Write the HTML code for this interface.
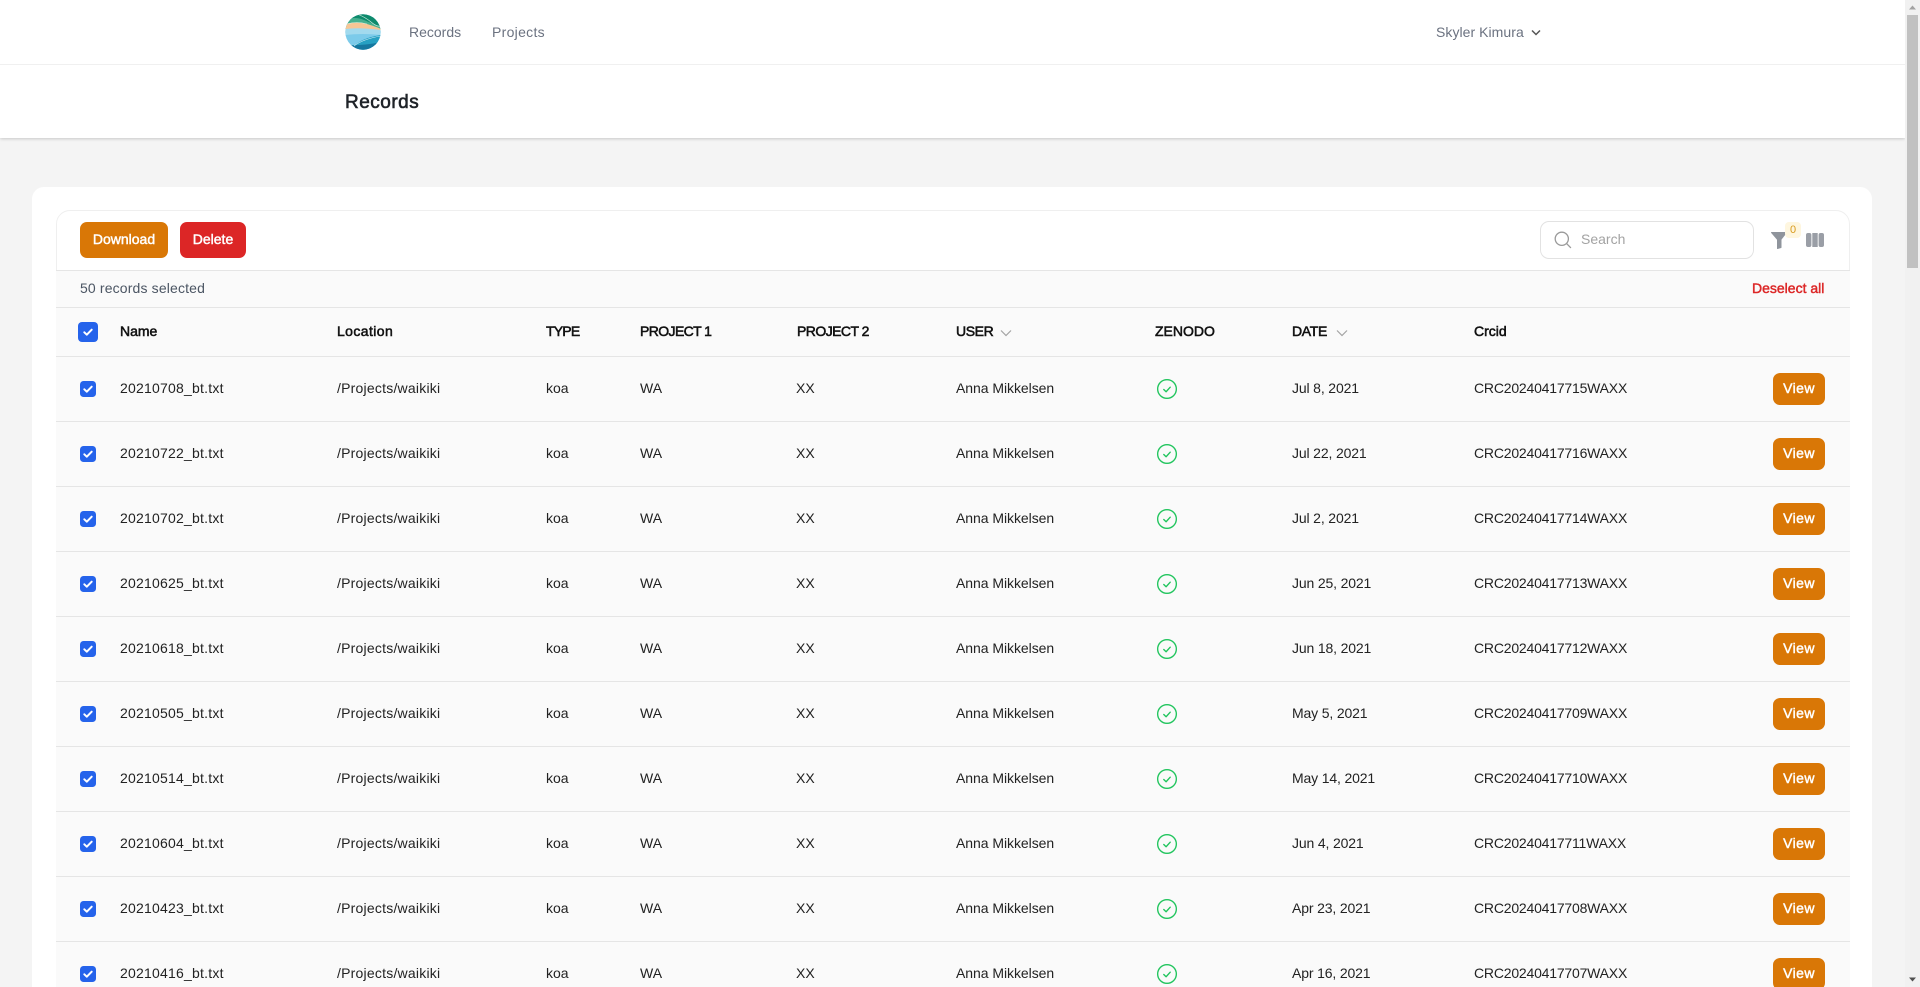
<!DOCTYPE html>
<html lang="en">
<head>
<meta charset="utf-8">
<title>Records</title>
<style>
*{box-sizing:border-box}
html,body{margin:0;padding:0;width:1920px;height:987px;overflow:hidden;background:#f4f4f4;font-family:"Liberation Sans",sans-serif;color:#1a1a1a}
#page{position:relative;width:1920px;height:987px;overflow:hidden;background:#f4f4f4}
.a{position:absolute;white-space:nowrap}
#top{position:absolute;left:0;top:0;width:1905px;height:138px;background:#fff;box-shadow:0 1px 3px rgba(0,0,0,.18)}
#line{position:absolute;left:0;top:64px;width:1905px;height:1px;background:#f0f0f0}
.nav{font-size:14px;color:#6b7280;top:24px;line-height:17px}
#outer{position:absolute;left:32px;top:187px;width:1840px;height:830px;background:#fff;border-radius:12px}
#tbl{position:absolute;left:56px;top:210px;width:1794px;height:777px;border:1px solid #efefef;border-radius:14px 14px 0 0;background:#fff;overflow:hidden}
.strip{position:absolute;left:56px;width:1794px;background:#fafafa;border-top:1px solid #e5e5e5}
.btn{position:absolute;color:#fff;font-size:14px;text-align:center;border-radius:7px;-webkit-text-stroke:.45px #fff}
.h{font-size:14px;top:323px;line-height:17px;color:#111;-webkit-text-stroke:.55px #111}
.row{position:absolute;left:56px;width:1794px;height:65px;background:#fafafa;border-top:1px solid #e5e5e5;font-size:14px;color:#222}
.row span{position:absolute;top:23px;line-height:17px;white-space:nowrap}
.row svg{position:absolute}
.row b{position:absolute;left:1717px;top:16px;width:52px;height:32px;background:#d97706;color:#fff;border-radius:7px;font-size:14px;font-weight:400;letter-spacing:.4px;-webkit-text-stroke:.45px #fff;text-align:center;line-height:31px}
.cb{position:absolute;left:24px;top:24px;width:16px;height:16px;background:#2563eb;border-radius:3.5px}
.c1{left:64px;letter-spacing:.22px}.c2{left:281px;letter-spacing:.22px}.c3{left:490px}.c4{left:584px}.c5{left:740px}.c6{left:900px;letter-spacing:-.05px}.c7{left:1236px;letter-spacing:-.15px}.c8{left:1418px;letter-spacing:-.2px}
</style>
</head>
<body>
<div id="page">
<svg width="0" height="0" style="position:absolute">
<defs>
<symbol id="ok" viewBox="0 0 24 24"><circle cx="12" cy="12" r="10.2" fill="none" stroke="#22c55e" stroke-width="1.5"/><path d="M8.5 12.5l2.5 2.5 4.5-5" fill="none" stroke="#22c55e" stroke-width="1.5" stroke-linecap="round" stroke-linejoin="round"/></symbol>
<symbol id="tick" viewBox="0 0 16 16"><path d="M4.3 8.3l2.5 2.4 4.9-5" fill="none" stroke="#fff" stroke-width="2" stroke-linecap="round" stroke-linejoin="round"/></symbol>
</defs>
</svg>

<div id="top"></div>
<div id="line"></div>

<svg class="a" style="left:345px;top:14px" width="36" height="36" viewBox="0 0 36 36">
<defs><clipPath id="lc"><circle cx="18" cy="18" r="17.7"/></clipPath></defs>
<g clip-path="url(#lc)">
<rect width="36" height="36" fill="#7ccbea"/>
<rect width="36" height="12" fill="#0e8a6c"/>
<path d="M0 6Q10 2 19 6T36 13V16H0Z" fill="#46b08f"/>
<path d="M0 10Q12 7 22 10T36 15V17H0Z" fill="#f7c695"/>
<path d="M0 15Q14 13 36 16V21Q18 19 0 21Z" fill="#a2daee"/>
<path d="M8 33Q16 24 36 21V36H0Z" fill="#26a0c2"/>
<path d="M0 31Q18 32 36 28V36H0Z" fill="#15779f"/>
<path d="M12 0Q20 3 26 8T36 12M2 10Q12 7 22 10" fill="none" stroke="#d8f0e4" stroke-width=".6"/>
<path d="M9 32Q18 25 36 22" fill="none" stroke="#d6f2fa" stroke-width=".6"/>
</g>
</svg>

<div class="a nav" style="left:409px">Records</div>
<div class="a nav" style="left:492px;letter-spacing:.3px">Projects</div>
<div class="a nav" style="left:1436px;letter-spacing:.05px">Skyler Kimura</div>
<svg class="a" style="left:1531px;top:29px" width="10" height="7" viewBox="0 0 10 7"><path d="M1 1.5l4 4 4-4" fill="none" stroke="#555" stroke-width="1.5"/></svg>
<div class="a" style="left:345px;top:92px;font-size:19px;letter-spacing:.5px;-webkit-text-stroke:.6px #1f2328;color:#1f2328;line-height:22px">Records</div>

<div id="outer"></div>
<div id="tbl"></div>

<div class="btn" style="left:80px;top:222px;width:88px;height:36px;line-height:35px;background:#d97706">Download</div>
<div class="btn" style="left:180px;top:222px;width:66px;height:36px;line-height:35px;background:#dc2626">Delete</div>

<div class="a" style="left:1540px;top:221px;width:214px;height:38px;border:1px solid #e2e2e2;border-radius:9px;background:#fff"></div>
<svg class="a" style="left:1554px;top:231px" width="18" height="18" viewBox="0 0 18 18"><circle cx="7.8" cy="7.8" r="6.6" fill="none" stroke="#9a9a9a" stroke-width="1.3"/><path d="M12.6 12.6l4.3 4.3" stroke="#9a9a9a" stroke-width="1.3"/></svg>
<div class="a" style="left:1581px;top:231px;font-size:14px;line-height:17px;color:#a3a3a3">Search</div>

<svg class="a" style="left:1771px;top:232px" width="16" height="17" viewBox="0 0 16 17"><path d="M.5 .5H15.5L10 7.5V15.5L6.5 16.5V7.5Z" fill="#8f949c" stroke="#8f949c" stroke-linejoin="round"/></svg>
<div class="a" style="left:1785px;top:222px;width:16px;height:16px;background:#fef6df;border-radius:4px;color:#d99a1c;font-size:11px;line-height:16px;text-align:center">0</div>
<svg class="a" style="left:1806px;top:233px" width="18" height="14" viewBox="0 0 18 14"><rect x="0" y="0" width="5.4" height="14" rx="2" fill="#9a9ea6"/><rect x="6.3" y="0" width="5.4" height="14" fill="#9a9ea6"/><rect x="12.6" y="0" width="5.4" height="14" rx="2" fill="#9a9ea6"/></svg>

<div class="strip" style="top:270px;height:37px"></div>
<div class="a" style="left:80px;top:280px;font-size:14px;line-height:17px;color:#4b5563;letter-spacing:.15px">50 records selected</div>
<div class="a" style="left:1752px;top:280px;font-size:14px;line-height:17px;color:#dc2626;-webkit-text-stroke:.45px #dc2626">Deselect all</div>
<div class="strip" style="top:307px;height:49px"></div>

<div class="a" style="left:78px;top:322px;width:20px;height:20px;background:#2563eb;border-radius:4px"><svg style="position:absolute;left:2px;top:2px" width="16" height="16"><use href="#tick"/></svg></div>
<div class="a h" style="left:120px">Name</div>
<div class="a h" style="left:337px;letter-spacing:.4px">Location</div>
<div class="a h" style="left:546px;letter-spacing:-.8px">TYPE</div>
<div class="a h" style="left:640px;letter-spacing:-.6px">PROJECT 1</div>
<div class="a h" style="left:797px;letter-spacing:-.55px">PROJECT 2</div>
<div class="a h" style="left:956px;letter-spacing:-.4px">USER</div>
<svg class="a" style="left:1000px;top:329px" width="12" height="8" viewBox="0 0 12 8"><path d="M1 1.5l5 5 5-5" fill="none" stroke="#a3a3a3" stroke-width="1.2"/></svg>
<div class="a h" style="left:1155px">ZENODO</div>
<div class="a h" style="left:1292px;letter-spacing:-.3px">DATE</div>
<svg class="a" style="left:1336px;top:329px" width="12" height="8" viewBox="0 0 12 8"><path d="M1 1.5l5 5 5-5" fill="none" stroke="#a3a3a3" stroke-width="1.2"/></svg>
<div class="a h" style="left:1474px">Crcid</div>

<div class="row" style="top:356px"><i class="cb"><svg width="16" height="16"><use href="#tick"/></svg></i><span class="c1">20210708_bt.txt</span><span class="c2">/Projects/waikiki</span><span class="c3">koa</span><span class="c4">WA</span><span class="c5">XX</span><span class="c6">Anna Mikkelsen</span><svg style="left:1100px;top:21px" width="22" height="22"><use href="#ok"/></svg><span class="c7">Jul 8, 2021</span><span class="c8">CRC20240417715WAXX</span><b>View</b></div>
<div class="row" style="top:421px"><i class="cb"><svg width="16" height="16"><use href="#tick"/></svg></i><span class="c1">20210722_bt.txt</span><span class="c2">/Projects/waikiki</span><span class="c3">koa</span><span class="c4">WA</span><span class="c5">XX</span><span class="c6">Anna Mikkelsen</span><svg style="left:1100px;top:21px" width="22" height="22"><use href="#ok"/></svg><span class="c7">Jul 22, 2021</span><span class="c8">CRC20240417716WAXX</span><b>View</b></div>
<div class="row" style="top:486px"><i class="cb"><svg width="16" height="16"><use href="#tick"/></svg></i><span class="c1">20210702_bt.txt</span><span class="c2">/Projects/waikiki</span><span class="c3">koa</span><span class="c4">WA</span><span class="c5">XX</span><span class="c6">Anna Mikkelsen</span><svg style="left:1100px;top:21px" width="22" height="22"><use href="#ok"/></svg><span class="c7">Jul 2, 2021</span><span class="c8">CRC20240417714WAXX</span><b>View</b></div>
<div class="row" style="top:551px"><i class="cb"><svg width="16" height="16"><use href="#tick"/></svg></i><span class="c1">20210625_bt.txt</span><span class="c2">/Projects/waikiki</span><span class="c3">koa</span><span class="c4">WA</span><span class="c5">XX</span><span class="c6">Anna Mikkelsen</span><svg style="left:1100px;top:21px" width="22" height="22"><use href="#ok"/></svg><span class="c7">Jun 25, 2021</span><span class="c8">CRC20240417713WAXX</span><b>View</b></div>
<div class="row" style="top:616px"><i class="cb"><svg width="16" height="16"><use href="#tick"/></svg></i><span class="c1">20210618_bt.txt</span><span class="c2">/Projects/waikiki</span><span class="c3">koa</span><span class="c4">WA</span><span class="c5">XX</span><span class="c6">Anna Mikkelsen</span><svg style="left:1100px;top:21px" width="22" height="22"><use href="#ok"/></svg><span class="c7">Jun 18, 2021</span><span class="c8">CRC20240417712WAXX</span><b>View</b></div>
<div class="row" style="top:681px"><i class="cb"><svg width="16" height="16"><use href="#tick"/></svg></i><span class="c1">20210505_bt.txt</span><span class="c2">/Projects/waikiki</span><span class="c3">koa</span><span class="c4">WA</span><span class="c5">XX</span><span class="c6">Anna Mikkelsen</span><svg style="left:1100px;top:21px" width="22" height="22"><use href="#ok"/></svg><span class="c7">May 5, 2021</span><span class="c8">CRC20240417709WAXX</span><b>View</b></div>
<div class="row" style="top:746px"><i class="cb"><svg width="16" height="16"><use href="#tick"/></svg></i><span class="c1">20210514_bt.txt</span><span class="c2">/Projects/waikiki</span><span class="c3">koa</span><span class="c4">WA</span><span class="c5">XX</span><span class="c6">Anna Mikkelsen</span><svg style="left:1100px;top:21px" width="22" height="22"><use href="#ok"/></svg><span class="c7">May 14, 2021</span><span class="c8">CRC20240417710WAXX</span><b>View</b></div>
<div class="row" style="top:811px"><i class="cb"><svg width="16" height="16"><use href="#tick"/></svg></i><span class="c1">20210604_bt.txt</span><span class="c2">/Projects/waikiki</span><span class="c3">koa</span><span class="c4">WA</span><span class="c5">XX</span><span class="c6">Anna Mikkelsen</span><svg style="left:1100px;top:21px" width="22" height="22"><use href="#ok"/></svg><span class="c7">Jun 4, 2021</span><span class="c8">CRC20240417711WAXX</span><b>View</b></div>
<div class="row" style="top:876px"><i class="cb"><svg width="16" height="16"><use href="#tick"/></svg></i><span class="c1">20210423_bt.txt</span><span class="c2">/Projects/waikiki</span><span class="c3">koa</span><span class="c4">WA</span><span class="c5">XX</span><span class="c6">Anna Mikkelsen</span><svg style="left:1100px;top:21px" width="22" height="22"><use href="#ok"/></svg><span class="c7">Apr 23, 2021</span><span class="c8">CRC20240417708WAXX</span><b>View</b></div>
<div class="row" style="top:941px"><i class="cb"><svg width="16" height="16"><use href="#tick"/></svg></i><span class="c1">20210416_bt.txt</span><span class="c2">/Projects/waikiki</span><span class="c3">koa</span><span class="c4">WA</span><span class="c5">XX</span><span class="c6">Anna Mikkelsen</span><svg style="left:1100px;top:21px" width="22" height="22"><use href="#ok"/></svg><span class="c7">Apr 16, 2021</span><span class="c8">CRC20240417707WAXX</span><b>View</b></div>

<div class="a" style="left:1905px;top:0;width:15px;height:987px;background:#f1f1f1"></div>
<div class="a" style="left:1907px;top:15px;width:11px;height:253px;background:#c1c1c1"></div>
<svg class="a" style="left:1905px;top:0" width="15" height="15" viewBox="0 0 15 15"><path d="M4 9.5L7.5 5.5 11 9.5Z" fill="#a3a3a3"/></svg>
<svg class="a" style="left:1905px;top:972px" width="15" height="15" viewBox="0 0 15 15"><path d="M4 5.5L7.5 9.5 11 5.5Z" fill="#505050"/></svg>
</div>
</body>
</html>
